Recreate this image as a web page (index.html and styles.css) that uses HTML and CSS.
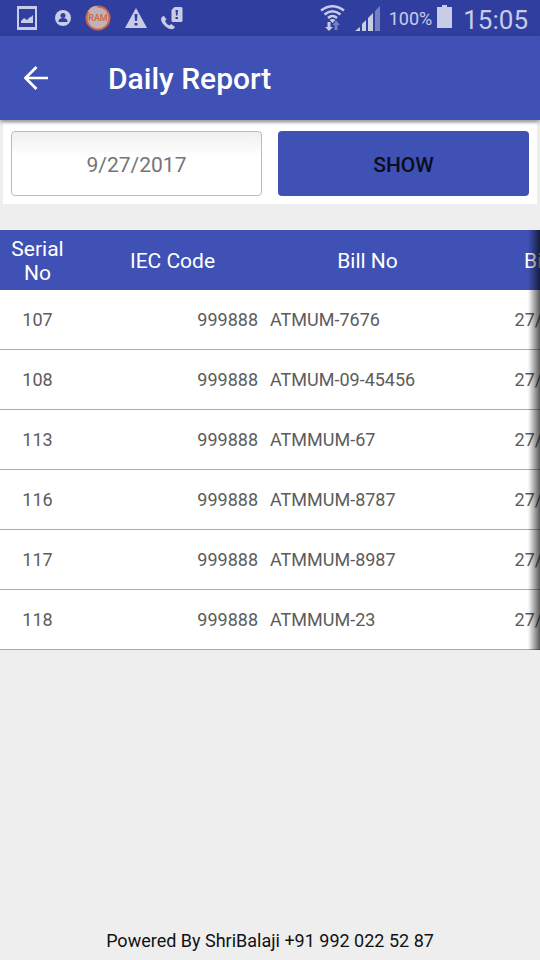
FILE: index.html
```html
<!DOCTYPE html>
<html lang="en">
<head>
<meta charset="utf-8">
<meta name="viewport" content="width=device-width, initial-scale=1">
<title>Daily Report</title>
<link rel="stylesheet" href="styles.css">
</head>
<body>
<div class="status-bar">
  <div class="notifications">
    <svg width="20" height="24" viewBox="0 0 20 24"><path fill-rule="evenodd" d="M0 0h20v24H0zM2 3v18h16V3z"/><path d="M4 17v-2l3-3 3 2 3-3h1l2-2v8z"/></svg>
    <svg width="16" height="16" viewBox="0 0 16 16"><circle cx="8" cy="8" r="8"/><g fill="#303f9f"><circle cx="8" cy="5.500" r="2.500"/><path d="M3.500 11.500Q3.500 8 8 8t4.500 3.500v.5h-9z"/></g></svg>
    <svg width="26" height="26" viewBox="0 0 26 26"><circle cx="13" cy="13" r="12.500" fill="#cf6645"/><circle cx="13" cy="13" r="10.500" fill="#c0b2b9"/><path d="M3.500 7Q7 2 12 2" fill="none" stroke="#c0b2b9" stroke-width="2"/><text x="13" y="16" class="ram-label" text-anchor="middle">RAM</text></svg>
    <svg width="22" height="20" viewBox="0 0 22 20"><path d="M11 0l11 20H0z"/><path fill="#303f9f" d="M9.500 6h3l-.5 7h-2zM9.500 15h3v2.500h-3z"/></svg>
    <svg width="22" height="23" viewBox="0 0 22 23"><path d="M13.500 0H20q1.500 0 1.500 1.500v12Q21.500 15 20 15h-8q-1.500 0-1.500-1.500V3z"/><path d="M1.500 9.500L3 9l2.500 3.500-1.500 1.500q1 3 4.500 4.500l1.500-1.500 3.500 2.500q.5 1-.5 2Q9 23.500 4.500 19.500T0 12q0-1.500 1.500-2.500z"/><path fill="#303f9f" d="M14.500 3H17l-.5 5.500H15zM14.500 10H17v2h-2.500z"/></svg>
  </div>
  <div class="system">
    <svg width="25" height="26" viewBox="0 0 25 26"><g fill="none" stroke="#c9cce7" stroke-width="2.500"><path d="M1 5.500Q12.500-3 24 5.500M4.500 9.500Q12.500 3 20.500 9.500M8 13q4.500-4 9 0"/></g><path d="M9.500 15q3-2 6 0l-3 3z"/><path d="M7.500 17h3v5H13l-4 4-4-4h2.500z"/><path fill="#7680c0" d="M14.500 25h3v-5H20l-4-4.500-3.500 4.500h2z"/></svg>
    <svg class="signal" width="25" height="25" viewBox="0 0 25 25"><path d="M0 25l5-4v4zM7 18l4-4v11H7zM13 12l5-5v18h-5z"/><path fill="#7680c0" d="M20 5l5-5v25h-5z"/></svg>
    <span class="charge">100%</span>
    <svg class="battery" width="15" height="23" viewBox="0 0 15 23"><path d="M5 0h5v2h5v21H0V2h5z"/></svg>
    <time class="clock">15:05</time>
  </div>
</div>
<header class="app-bar">
  <button class="back" type="button" aria-label="Back"><svg width="24" height="24" viewBox="0 0 24 24"><path d="M24 12H2M12.500 1L1.500 12l11 11" fill="none" stroke="#fff" stroke-width="2.700"/></svg></button>
  <h1>Daily Report</h1>
</header>
<main>
  <form class="filter">
    <input type="text" value="9/27/2017" aria-label="Report date" readonly>
    <button type="button">SHOW</button>
  </form>
  <div class="report">
    <div class="report-scroll">
      <table>
        <colgroup><col class="col-serial"><col class="col-wide"><col class="col-wide"><col class="col-wide"></colgroup>
        <thead><tr><th>Serial No</th><th>IEC Code</th><th>Bill No</th><th>Bill Date</th></tr></thead>
        <tbody>
          <tr><td>107</td><td class="code">999888</td><td class="bill">ATMUM-7676</td><td>27/09/2017</td></tr>
          <tr><td>108</td><td class="code">999888</td><td class="bill">ATMUM-09-45456</td><td>27/09/2017</td></tr>
          <tr><td>113</td><td class="code">999888</td><td class="bill">ATMMUM-67</td><td>27/09/2017</td></tr>
          <tr><td>116</td><td class="code">999888</td><td class="bill">ATMMUM-8787</td><td>27/09/2017</td></tr>
          <tr><td>117</td><td class="code">999888</td><td class="bill">ATMMUM-8987</td><td>27/09/2017</td></tr>
          <tr><td>118</td><td class="code">999888</td><td class="bill">ATMMUM-23</td><td>27/09/2017</td></tr>
        </tbody>
      </table>
    </div>
  </div>
</main>
<footer>Powered By ShriBalaji +91 992 022 52 87</footer>
</body>
</html>
```
FILE: styles.css
```css
* { box-sizing: border-box; }

body {
  margin: 0;
  min-height: 100vh;
  display: flex;
  flex-direction: column;
  background: #eee;
  color: #111;
  font-family: Roboto, sans-serif;
}

svg { display: block; flex: none; fill: #c9cce7; }

.status-bar {
  display: flex;
  justify-content: space-between;
  height: 36px;
  padding: 0 12px 0 17px;
  background: #303f9f;
  color: #c9cce7;
}

.notifications, .system { display: flex; align-items: center; }
.notifications { gap: 14px; }
.notifications svg:first-child { margin-right: 4px; }
.ram-label { font-size: 9px; font-weight: 500; fill: #cf6645; }
.signal { margin: 0 9px 0 10px; }
.charge { margin-right: 5px; font-size: 18px; }
.battery { margin-bottom: 3px; }
.clock { margin-left: 11px; padding-top: 4px; font-size: 26px; line-height: 32px; }

.app-bar {
  position: relative;
  display: flex;
  align-items: center;
  gap: 48px;
  height: 84px;
  padding: 0 12px;
  background: #3f51b5;
  box-shadow: 0 2px 4px rgba(0, 0, 0, .4);
  color: #fff;
}

.back {
  display: grid;
  place-items: center;
  width: 48px;
  height: 48px;
  padding: 0;
  border: 0;
  background: none;
}

h1 { margin: 0; padding-top: 2px; font-size: 30px; font-weight: 500; line-height: 36px; }

main { flex: 1; }

.filter {
  display: grid;
  grid-template-columns: 1fr 1fr;
  gap: 16px;
  margin: 3px 3px 26px;
  padding: 8px;
  background: #fff;
}

.filter input, .filter button {
  min-width: 0;
  height: 65px;
  padding: 2px 0 0;
  border-radius: 4px;
  font-family: inherit;
  font-size: 21px;
  text-align: center;
}

.filter input {
  border: 1px solid #bbb;
  background: linear-gradient(#f0f0f0, #fff 40%);
  color: #757575;
}

.filter button {
  border: 0;
  background: #3f51b5;
  color: #0a0d1c;
  font-weight: 500;
}

.report { position: relative; }
.report-scroll { overflow-x: auto; scrollbar-width: none; }

.report::after {
  content: "";
  position: absolute;
  inset: 0 0 0 auto;
  width: 12px;
  background: linear-gradient(to right, transparent, rgba(0, 0, 0, .65));
  pointer-events: none;
}

table { width: 660px; table-layout: fixed; border-collapse: separate; border-spacing: 0; }
.col-serial { width: 75px; }
.col-wide { width: 195px; }
th, td { height: 60px; text-align: center; vertical-align: middle; }

th {
  padding: 2px 10px 0;
  background: #3f51b5;
  color: #fff;
  font-size: 21px;
  font-weight: 400;
  line-height: 24px;
}

td {
  padding: 0;
  border-bottom: 1px solid #aaa;
  background: #fff;
  color: #5c5c5c;
  font-size: 18px;
  line-height: 24px;
}

td.code { padding-right: 12px; text-align: right; }
td.bill { text-align: left; }

footer { padding-bottom: 8px; font-size: 18px; line-height: 22px; text-align: center; }
```
